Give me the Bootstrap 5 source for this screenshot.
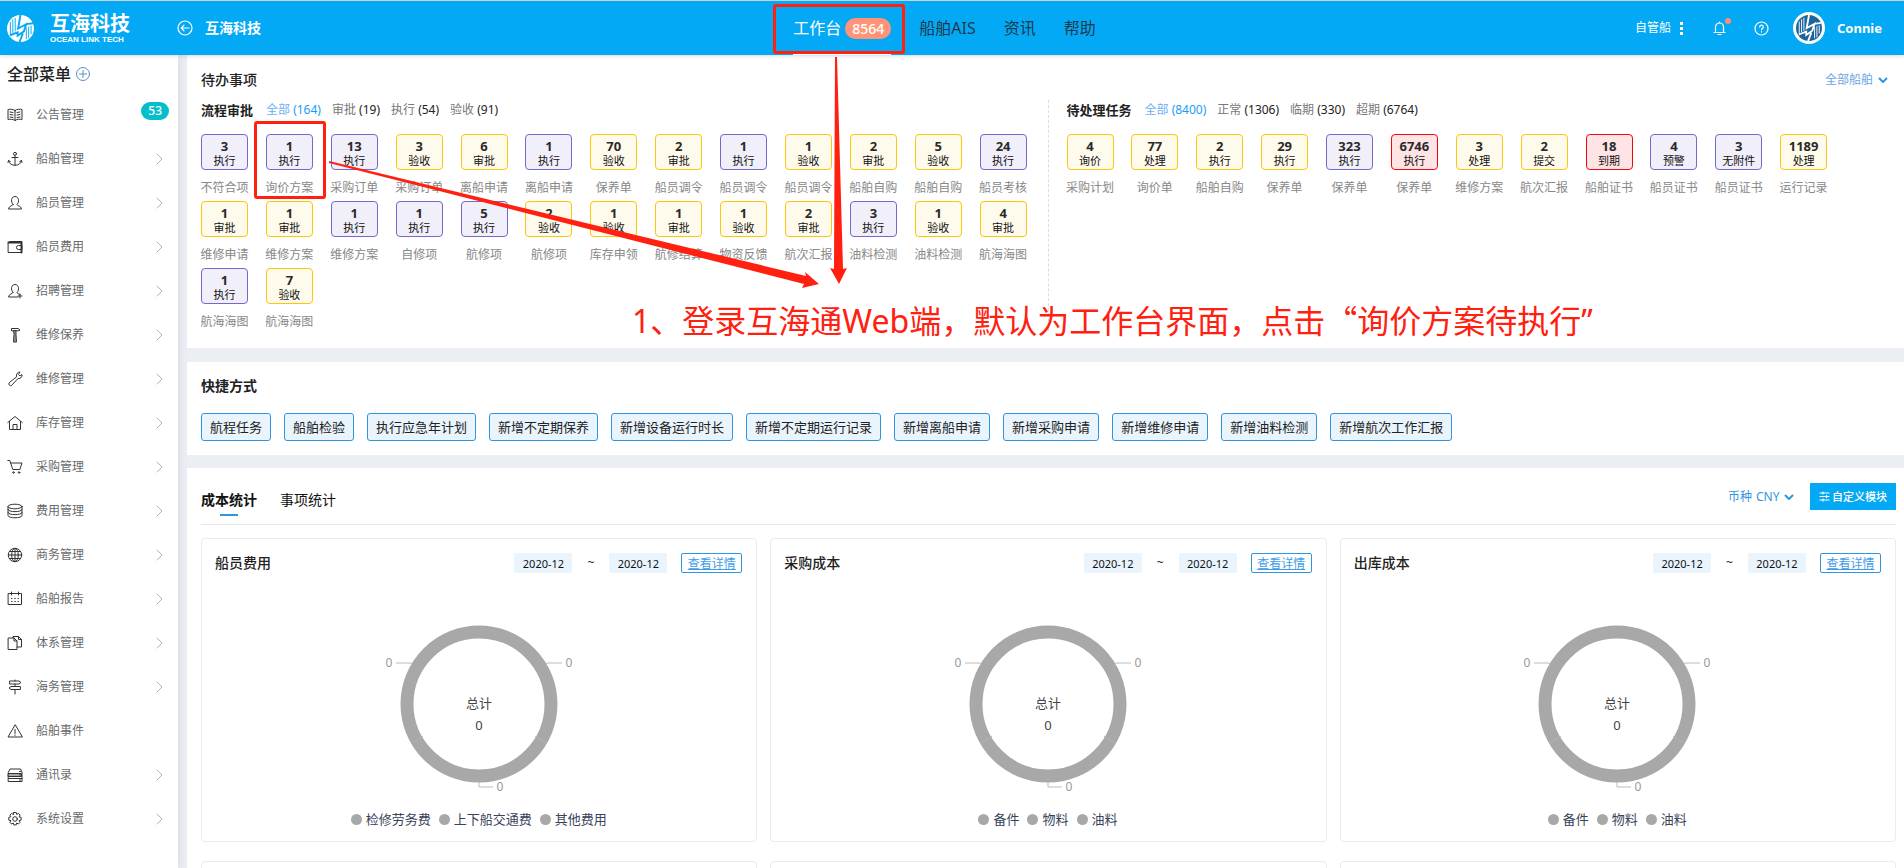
<!DOCTYPE html>
<html lang="zh-CN">
<head>
<meta charset="utf-8">
<meta name="viewport" content="width=device-width, initial-scale=1">
<title>互海科技 - 工作台</title>
<link rel="stylesheet" href="https://cdn.jsdelivr.net/npm/bootstrap@5.3.0/dist/css/bootstrap.min.css">
<style>
body{font-family:"Noto Sans","Noto Sans CJK SC",sans-serif;font-size:12px;line-height:18px;color:#222;background:#ebeff4}
a{text-decoration:none;color:inherit}
svg{flex:none;display:block}
.ico{fill:none;stroke:currentColor;stroke-width:1.2;stroke-linecap:round;stroke-linejoin:round}
.topbar{height:55px;background:#04a9f5;border-top:1px solid #c9d3d8;padding:0 22px 0 7px;color:#fff;box-shadow:0 1px 4px rgba(0,0,0,.16);z-index:3}
.side-part{flex:1 1 0}
.brand-name{font-size:20px;line-height:24px;font-weight:700}
.brand-sub{font:700 8px/8px "Liberation Sans",sans-serif}
.brand-box{width:170px}
.main-tabs a{padding:0 14px;font-size:16px;height:54px;color:#1c3a4d}
.main-tabs a.active{color:#fff}
.tab-inner{height:54px;border-bottom:2px solid #fff;padding-top:2px}
.count-pill{background:#ff9478;border-radius:11px;font-size:14px;line-height:21px;padding:0 7px;font-weight:500;color:#fff}
.red-frame{position:absolute;border:3px solid #ff2010;border-radius:3px;pointer-events:none}
.tab-frame{left:-6px;right:0;top:3px;bottom:1px}
.bell-dot{position:absolute;width:6px;height:6px;border-radius:50%;background:#ff8c75;right:-5px;top:-3px}
.sidebar{width:178px;background:#fff;flex:none;box-shadow:1px 0 8px rgba(60,80,100,.12);z-index:2}
.menu-title{font-size:16px;line-height:20px;padding:9px 7px;font-weight:500}
.side-item{height:44px;padding:0 15px 0 7px;color:#6a6a6a;gap:13px}
.side-item .ico{color:#333;stroke-width:1}
.side-item .arrow{color:#b4b4b4}
.side-item .num{background:#04bfc9;color:#fff;border-radius:9px;padding:0 7px;margin:0 -6px 8px 0;font-weight:500}
.main{padding-left:9px;overflow:hidden}
.panel{background:#fff;padding:15px 8px 14px 14px}
.todo{padding-bottom:17px}
.panel.shortcuts{margin:14px 0 13px;padding-top:14px}
.h14{font-size:14px;line-height:20px;font-weight:500;color:#222}
.h13{font-size:13px;line-height:20px;font-weight:700;color:#222}
.pick{appearance:none;border:0;background:none;padding:0;color:inherit;font:inherit;line-height:20px}
.lists{margin-top:10px}
.list-head{gap:13px}
.filters{gap:11px;color:#777;line-height:20px}
.filters b{font-weight:400;color:#222}
.filters .on{color:#6cb0f2}.filters .on b{color:#189ef5}
.left-col{border-right:1px dashed #ddd;padding-right:3px}
.right-col{padding:0 51px 0 18px}
.tiles{display:grid;row-gap:4px;margin-top:14px}
.left-col .tiles{grid-template-columns:repeat(13,1fr)}
.right-col .tiles{grid-template-columns:repeat(12,1fr)}
.tile{width:47px;text-align:center;position:relative}
.tile-box{height:36px;border:1px solid;border-radius:4px;padding-top:3px;font-size:11px;line-height:14px;color:#111}
.tile-box strong{display:block;font-size:13px;line-height:16px;font-weight:700;color:#2a2a2a}
.tile-name{display:block;margin:9px -4px 0;color:#888;white-space:nowrap}
.p{border-color:#7468cc;background:#f1effa}
.y{border-color:#fcc60b;background:#fffbec}
.r{border-color:#f5060f;background:#ffe4e5}
.tile-frame{left:-12px;right:-13px;top:-13px;bottom:-2px}
.quick-list{gap:13px;margin-top:17px}
.quick{border:1px solid #3095e0;border-radius:3px;background:#e9f4fd;color:#222;font-size:13px;line-height:20px;padding:3px 8px}
.blue{color:#3095e0}
.stat-head{height:42px;border-bottom:1px solid #e8e8e8}
.stat-tab{border:0;background:none;padding:7px 0 6px;font-size:14px;line-height:20px;color:#111;position:relative;height:33px}
.stat-tab.on{font-weight:700;margin-right:23px}
.stat-tab.on::after{content:"";position:absolute;left:19px;right:19px;bottom:0;height:2px;background:#3095e0}
.custom{border:0;border-radius:0;background:#04a9f5;color:#fff;font-size:11px;line-height:15px;font-weight:500;padding:6px 9px;gap:2px}
.cards{display:grid;grid-template-columns:repeat(3,1fr);gap:19px 13px;margin-top:13px}
.stat-card{border:1px solid #ebebeb;border-radius:4px;padding:14px 14px 13px 13px;min-height:304px}
.date{border:0;border-radius:2px;background:#e9f4fd;width:58px;height:20px;font-size:11px;text-align:center;padding:0;color:#111}
.tilde{padding:0 15px}
.detail{border:1px solid #3095e0;border-radius:2px;color:#3f9de8;width:61px;height:20px;text-align:center;line-height:19px;text-decoration:underline;margin-left:14px}
.donut{margin:47px auto 14px;font-size:12px}
.legend{font-size:13px;color:#38435a;gap:8px}
.legend i{width:11px;height:11px;border-radius:50%;background:#a8a8a8}
.legend span{gap:4px}
.notes{position:absolute;left:0;top:0;pointer-events:none;z-index:5}
.note-text{position:absolute;left:632px;top:299px;font-size:32px;line-height:44px;color:#ff2010;white-space:nowrap;z-index:5;margin:0}
.wide{font-family:"Noto Sans CJK SC",sans-serif;line-height:1}
</style>
</head>
<body>
<svg class="d-none">
  <symbol id="logo" viewBox="0 0 28 28"><circle cx="14" cy="14" r="14"/><g fill="none" stroke="var(--cut)"><path d="M3.500 7v13M6 4.500v14M8.500 3v14M20 13v12M22.500 12v12M25 11v9" stroke-width="1"/><path d="M14 0L11.500 14l8.500-4.500L17.500 17 11 21.500V18L3 21M20 9.500l7-1M13 28l3.500-9" stroke-width="2"/></g></symbol>
  <symbol id="chev" viewBox="0 0 10 6"><path d="M1 1l4 4 4-4" fill="none" stroke="currentColor" stroke-width="2"/></symbol>
</svg>
<div class="vh-100 overflow-hidden d-flex flex-column position-relative">
  <header class="topbar d-flex align-items-center flex-shrink-0">
    <div class="side-part d-flex align-items-center">
      <div class="brand-box d-flex align-items-center">
        <svg width="27" height="27" fill="#fff" style="--cut:#04a9f5"><use href="#logo"/></svg>
        <div class="ms-3"><div class="brand-name">互海科技</div><div class="brand-sub">OCEAN LINK TECH</div></div>
      </div>
      <a href="#" class="d-flex align-items-center">
        <svg class="ico" width="16" height="16" viewBox="0 0 16 16"><circle cx="8" cy="8" r="7"/><path d="M12 8H4.500M7 5.200L4.300 8 7 10.800"/></svg>
        <span class="h14 text-white fw-bold ms-2 ps-1">互海科技</span>
      </a>
    </div>
    <nav class="main-tabs d-flex">
      <a href="#" class="active position-relative"><span class="tab-inner d-flex align-items-center">工作台<span class="count-pill ms-1">8564</span></span><span class="red-frame tab-frame"></span></a>
      <a href="#" class="d-flex align-items-center">船舶AIS</a>
      <a href="#" class="d-flex align-items-center">资讯</a>
      <a href="#" class="d-flex align-items-center">帮助</a>
    </nav>
    <div class="side-part d-flex align-items-center justify-content-end">
      <a href="#" class="d-flex align-items-center gap-2 me-1">自管船<svg width="6" height="13" fill="#fff"><path d="M1 0h3v3H1zM1 5h3v3H1zM1 10h3v3H1z"/></svg></a>
      <a href="#" class="position-relative mx-4" aria-label="消息"><svg class="ico" width="13" height="15" viewBox="0 0 13 15"><path d="M1 11.500h11M2.500 11.500V6a4 4 0 0 1 8 0v5.500M6.500 2V1M5 13.500h3"/></svg><span class="bell-dot"></span></a>
      <a href="#" class="me-4 ms-1" aria-label="帮助中心"><svg class="ico" width="15" height="15" viewBox="0 0 15 15"><circle cx="7.500" cy="7.500" r="6.500"/><path d="M5.700 6a1.800 1.800 0 1 1 2.600 1.600c-.6.300-.8.600-.8 1.200M7.500 10.700v.2"/></svg></a>
      <a href="#" class="d-flex align-items-center"><svg width="32" height="32" viewBox="0 0 32 32"><circle cx="16" cy="16" r="16" fill="#fff"/><svg x="3" y="3" width="26" height="26" fill="#1c659c" style="--cut:#fff"><use href="#logo"/></svg></svg><span class="h13 text-white ms-2 ps-1">Connie</span></a>
    </div>
  </header>
  <div class="d-flex flex-grow-1 overflow-hidden">
    <aside class="sidebar">
      <div class="menu-title d-flex align-items-center">全部菜单<svg class="ico ms-1" width="16" height="16" viewBox="0 0 16 16" style="color:#5b8fc6"><circle cx="8" cy="8" r="6.500" stroke-width="1"/><path d="M4.500 8h7M8 4.500v7" stroke-width="1"/></svg></div>
      <nav id="menu"></nav>
    </aside>
    <main class="main flex-grow-1">
      <section class="panel todo">
        <div class="d-flex justify-content-between">
          <h2 class="h14 m-0">待办事项</h2>
          <label class="d-flex align-items-center gap-1 me-2" style="color:#6ba5e4"><select class="pick h13 fw-normal" style="color:inherit" aria-label="船舶"><option>全部船舶</option></select><svg class="blue" width="10" height="6"><use href="#chev"/></svg></label>
        </div>
        <div class="row g-0 lists">
          <div class="col-6 left-col">
            <div class="d-flex list-head"><h3 class="h13 m-0">流程审批</h3><div class="filters d-flex"><a href="#" class="on">全部 <b>(164)</b></a><a href="#">审批 <b>(19)</b></a><a href="#">执行 <b>(54)</b></a><a href="#">验收 <b>(91)</b></a></div></div>
            <div class="tiles" id="flow"></div>
          </div>
          <div class="col-6 right-col">
            <div class="d-flex list-head"><h3 class="h13 m-0">待处理任务</h3><div class="filters d-flex"><a href="#" class="on">全部 <b>(8400)</b></a><a href="#">正常 <b>(1306)</b></a><a href="#">临期 <b>(330)</b></a><a href="#">超期 <b>(6764)</b></a></div></div>
            <div class="tiles" id="tasks"></div>
          </div>
        </div>
      </section>
      <section class="panel shortcuts">
        <h2 class="h14 fw-bold m-0">快捷方式</h2>
        <div class="d-flex flex-wrap quick-list" id="quick"></div>
      </section>
      <section class="panel">
        <div class="stat-head d-flex align-items-start">
          <button class="stat-tab on">成本统计</button><button class="stat-tab">事项统计</button>
          <div class="ms-auto d-flex align-items-center">
            <label class="blue d-flex align-items-center gap-1 me-3">币种 <select class="pick"><option>CNY</option></select><svg width="10" height="6"><use href="#chev"/></svg></label>
            <button class="custom d-flex align-items-center"><svg class="ico" width="11" height="11" viewBox="0 0 11 11"><path d="M1 2h9M1 5.500h9M1 9h9M4 1v2M7.500 4.500v2M4 8v2"/></svg>自定义模块</button>
          </div>
        </div>
        <div class="cards" id="cards"></div>
      </section>
    </main>
  </div>
  <svg class="notes" width="900" height="300" fill="#ff2010"><path d="M835 57h2l6 212 4-1-8 16-9-16 4 1z"/><path d="M329 161L806 276l-1-4 14 12-17 4 2-4L329 163z"/></svg>
  <p class="note-text">1、登录互海通Web端，默认为工作台界面，点击<span class="wide">“</span>询价方案待执行”</p>
</div>
<script src="https://cdn.jsdelivr.net/npm/bootstrap@5.3.0/dist/js/bootstrap.bundle.min.js"></script>
<script>
const menu = [
 ['公告管理','<path d="M8 3.500C6 2 3 2 1 2.500v10c2-.5 5-.5 7 1 2-1.500 5-1.500 7-1v-10c-2-.5-5-.5-7 1zM8 3.500v10M3 5l3 .5M3 7.500l3 .5M3 10l3 .5M13 5l-3 .5M13 7.500l-3 .5M13 10l-3 .5"/>'],
 ['船舶管理','<circle cx="8" cy="2.800" r="1.500"/><path d="M8 4.300v10M5 6.500h6M1.500 9.500c.5 3 3 4.800 6.500 4.800s6-1.800 6.500-4.800M1 11.500l.5-2 1.800 1M15 11.500l-.5-2-1.800 1"/>'],
 ['船员管理','<path d="M6 9.500C3.500 7 4 1.500 8 1.500s4.500 5.500 2 8c0 1.500 4.500 1.500 4.500 4.500h-13c0-3 4.500-3 4.500-4.500z"/>'],
 ['船员费用','<path d="M1.500 3.500h13v10h-13zM1.500 3.500L3 2.500h11.500v1M14.500 6.500h-3a2 2 0 0 0 0 4h3z" /><path d="M1.500 3.500h13M14.500 3v10.500" stroke-width="2"/>'],
 ['招聘管理','<path d="M6 9.500C3.500 7 4 1.500 8 1.500s4.500 5.500 2 8c0 1 2 1.500 3 2M6 9.500c0 1.500-4.500 1.500-4.500 4.500H11M13 11v4M11 13h4"/>'],
 ['维修保养','<path d="M4.500 3.500V1.500H11l2 1.500-1 .5z"/><path d="M7 3.500h2V8l.5 7h-3L7 8z" fill="#999"/>'],
 ['维修管理','<path d="M9.500 5.500c-.5-2.500 1-4.500 3.500-4.500l-1.500 2.500 1.500 1.500L15 3.500c.5 2.500-1.500 4.500-4 4L4.500 14.500c-1.500 1-3.500-1-2.500-2.500z"/>'],
 ['库存管理','<path d="M.8 7.500L8 1.500l7.200 6M2.500 6.500v8h11v-8M6 14.500v-5h4v5"/>'],
 ['采购管理','<path d="M.8 1.500h2l3 9h7L15 4H4"/><circle cx="6.500" cy="13.500" r=".8"/><circle cx="12" cy="13.500" r=".8"/>'],
 ['费用管理','<ellipse cx="8" cy="3.500" rx="7" ry="2.300"/><path d="M1 3.500v9c0 3 14 3 14 0v-9M1 6.500c0 3 14 3 14 0M1 9.500c0 3 14 3 14 0"/>'],
 ['商务管理','<circle cx="8" cy="8" r="6.700"/><ellipse cx="8" cy="8" rx="3.300" ry="6.700"/><path d="M8 1.300v13.400M1.300 8h13.400M2.500 4.500h11M2.500 11.500h11"/>'],
 ['船舶报告','<path d="M1.500 2.500h13v11h-13zM4.500 1v3M11.500 1v3M4.500 7.500h.5M7.700 7.500h.6M11 7.500h.5M4.500 10.500h.5M7.700 10.500h.6M11 10.500h.5"/>'],
 ['体系管理','<path d="M6 3V1.500h5.500l3 3V12H10M11.500 1.500v3h3M1.500 3H7l3 3v8.500H1.500zM7 3v3h3"/>'],
 ['海务管理','<path d="M3 2h9l2 1.500L12 5H3zM13 7.500H4L2 9l2 1.500h9zM8 1v1M8 5v2.500M8 10.500v4.500"/>'],
 ['船舶事件','<path d="M8 2L1 14h14zM8 6.500v4M8 12v.4"/>'],
 ['通讯录','<path d="M1.500 5l1.500-3h10.500L15 5v9.500H1.500z"/><path d="M1.500 6.500h13v3h-13z" fill="#aaa"/><path d="M1.500 11.500H15M12.500 4.500h1M12.500 8h1M12.500 13h1"/>'],
 ['系统设置','<circle cx="8" cy="8" r="2.300"/><path d="M6.800 1.500h2.400l.5 1.900 1.700-1 1.700 1.700-1 1.700 2 .5v2.800l-2 .5 1 1.700-1.700 1.700-1.700-1-.5 1.900H6.800L6.300 12l-1.700 1-1.700-1.700 1-1.700-2.100-.5V6.300l2.100-.5-1-1.700 1.700-1.700 1.700 1z"/>']];
document.getElementById('menu').innerHTML = menu.map(([t, p], i) =>
 `<a href="#" class="side-item d-flex align-items-center"><svg class="ico" width="16" height="16" viewBox="0 0 16 16">${p}</svg><span>${t}</span>` +
 (i === 0 ? '<span class="num ms-auto">53</span>' : i === 14 ? '' : '<svg class="ico arrow ms-auto" width="7" height="12" viewBox="0 0 7 12"><path d="M1 1l5 5-5 5"/></svg>') + '</a>').join('');

const tiles = (id, rows, framed) => document.getElementById(id).innerHTML = rows.trim().split(/\s+/).map((s, i) => {
  const [c, n, act, name] = s.split(',');
  return `<a href="#" class="tile"><span class="tile-box d-block ${c}"><strong>${n}</strong>${act}</span><span class="tile-name">${name}</span>${i === framed ? '<span class="red-frame tile-frame"></span>' : ''}</a>`;
}).join('');
tiles('flow', `p,3,执行,不符合项 p,1,执行,询价方案 p,13,执行,采购订单 y,3,验收,采购订单 y,6,审批,离船申请 p,1,执行,离船申请 y,70,验收,保养单 y,2,审批,船员调令 p,1,执行,船员调令 y,1,验收,船员调令 y,2,审批,船舶自购 y,5,验收,船舶自购 p,24,执行,船员考核
 y,1,审批,维修申请 y,1,审批,维修方案 p,1,执行,维修方案 p,1,执行,自修项 p,5,执行,航修项 y,2,验收,航修项 y,1,验收,库存申领 y,1,审批,航修结算 y,1,验收,物资反馈 y,2,审批,航次汇报 p,3,执行,油料检测 y,1,验收,油料检测 y,4,审批,航海海图
 p,1,执行,航海海图 y,7,验收,航海海图`, 1);
tiles('tasks', `y,4,询价,采购计划 y,77,处理,询价单 y,2,执行,船舶自购 y,29,执行,保养单 p,323,执行,保养单 r,6746,执行,保养单 y,3,处理,维修方案 y,2,提交,航次汇报 r,18,到期,船舶证书 p,4,预警,船员证书 p,3,无附件,船员证书 y,1189,处理,运行记录`, -1);

document.getElementById('quick').innerHTML = ['航程任务','船舶检验','执行应急年计划','新增不定期保养','新增设备运行时长','新增不定期运行记录','新增离船申请','新增采购申请','新增维修申请','新增油料检测','新增航次工作汇报']
 .map(t => `<button class="quick">${t}</button>`).join('');

const card = (title, legend) => `<article class="stat-card"><div class="d-flex align-items-center"><h3 class="h14 m-0 me-auto">${title}</h3>
 <input class="date" value="2020-12" aria-label="${title}开始月份"><span class="tilde">~</span><input class="date" value="2020-12" aria-label="${title}结束月份"><a href="#" class="detail">查看详情</a></div>
 <svg class="donut" width="220" height="176" viewBox="0 0 220 176" text-anchor="middle"><circle cx="110" cy="84" r="72" fill="none" stroke="#a8a8a8" stroke-width="13"/><path d="M54 116l-11 7M166 116l11 7" stroke="#b4b4b4"/><path d="M43 46l-1-3H27M177 46l1-3h15M110 162v5h14" fill="none" stroke="#bbb"/><g fill="#999"><text x="20" y="47">0</text><text x="200" y="47">0</text><text x="131" y="171">0</text></g><g fill="#444" font-size="13"><text x="110" y="88">总计</text><text x="110" y="110">0</text></g></svg>
 <div class="legend d-flex justify-content-center">${legend.map(l => `<span class="d-flex align-items-center"><i></i>${l}</span>`).join('')}</div></article>`;
const goods = ['备件','物料','油料'];
document.getElementById('cards').innerHTML = card('船员费用', ['检修劳务费','上下船交通费','其他费用']) + card('采购成本', goods) + card('出库成本', goods) + '<article class="stat-card"></article>'.repeat(3);
</script>
</body>
</html>
